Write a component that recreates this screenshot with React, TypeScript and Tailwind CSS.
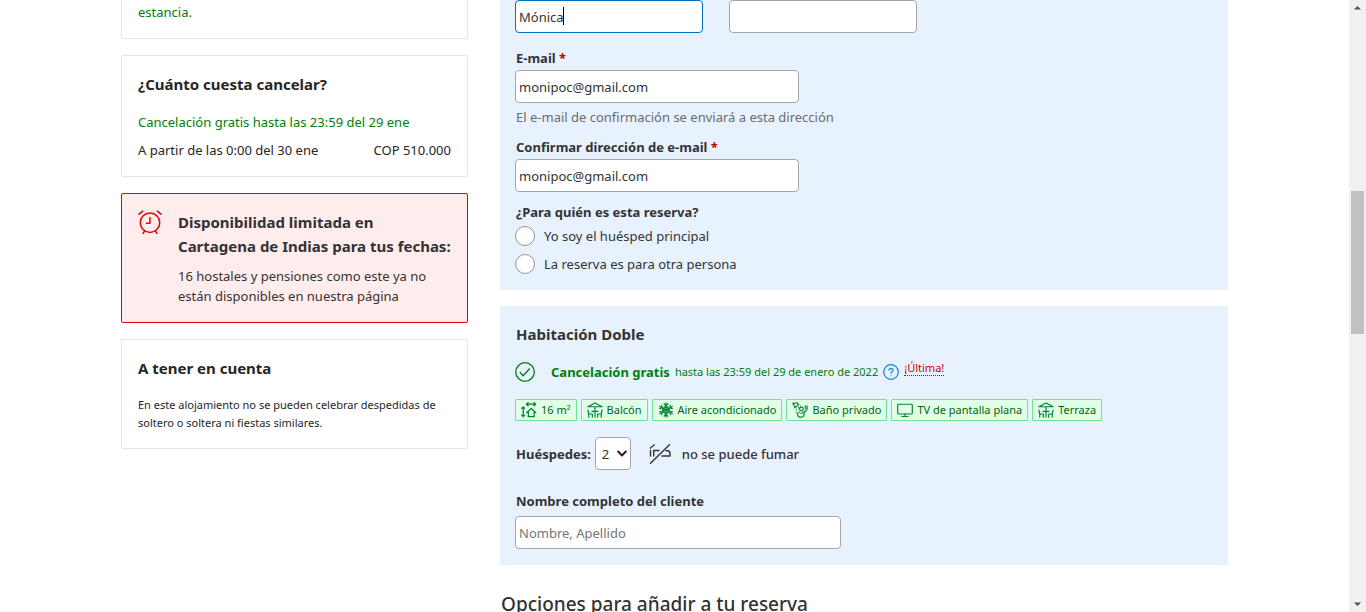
import type { ReactNode } from "react";

const card = "rounded-[2px] border border-[#e6e6e6] p-4";
const fieldBase =
  "block h-[33px] max-w-full rounded-[4px] border bg-white px-[3px] text-[13px] leading-5 text-[#333] placeholder:text-[#757575] outline-none";
const field = `${fieldBase} border-[#a6a6a6]`;
const label = "block pl-px text-[13px] leading-5 font-bold";

function Svg({ children, className, box = "0 0 24 24", sw = 1.5 }: { children: ReactNode; className: string; box?: string; sw?: number }) {
  return (
    <svg viewBox={box} className={className} fill="none" stroke="currentColor" strokeWidth={sw} strokeLinecap="round" strokeLinejoin="round" aria-hidden="true">
      {children}
    </svg>
  );
}

const badgeIcon = "size-4 shrink-0";

function SizeIcon() {
  return (
    <Svg className={badgeIcon} box="0 0 18 18" sw={1.4}>
      <path d="M6 2.500h10.500M8 .8 6 2.500l2 1.700M14.700.8l1.800 1.700-1.800 1.700M2.500 5.500v11M.8 7.200l1.700-1.700 1.700 1.700M.8 14.800l1.700 1.700 1.700-1.700" />
      <path d="M6.300 12 11.500 7.300l5.200 4.700M8.200 11v5.500h6.600V11" />
    </Svg>
  );
}

function PatioIcon() {
  return (
    <Svg className={badgeIcon} box="0 0 18 18" sw={1.3}>
      <path d="M1 5.300 9 1l8 4.300zM9 5.300V17.200M5.500 10.500h7M1 9l1 4.500h4v3.700M2 13.500v3.700M17 9l-1 4.500h-4v3.700M16 13.500v3.700" />
    </Svg>
  );
}

function SnowIcon() {
  const arms = [0, 60, 120, 180, 240, 300];
  return (
    <Svg className={badgeIcon} box="0 0 18 18" sw={1.3}>
      {arms.map((a) => (
        <path key={a} transform={`rotate(${a} 9 9)`} d="M9 9V.9M6.800 2 9 4.200 11.200 2M7.400 5.400 9 6.800l1.600-1.400" />
      ))}
    </Svg>
  );
}

function BathIcon() {
  return (
    <Svg className={badgeIcon} box="0 0 18 18" sw={1.3}>
      <path d="M.8 2 6 .9M1.300 1l1.900 5.500M3.200 6.500l4.300-3.700M6 .9l1.500 1.900M5 8.500v.3M7.200 6.300v.3M9.300 4.300v.3M4.500 11.500v.3" />
      <circle cx="10.600" cy="7.800" r="2.100" />
      <path d="M17 4.200v3.300c0 1.700-1.300 2.700-3.300 3.500v2.200c0 2.300-1.500 3.900-3.700 3.900s-3.700-1.400-3.700-3.700c0-1.400.8-2.200 2.200-2.200M15 4.200v3.300M9.800 12.700c1.200 0 2.800-.5 3.900-1.700" />
    </Svg>
  );
}

function TvIcon() {
  return (
    <Svg className={badgeIcon} box="0 0 18 18" sw={1.3}>
      <rect x=".8" y="2.500" width="16.400" height="11" rx="1" />
      <path d="M9 13.500v2.700M5.500 16.300h7" />
    </Svg>
  );
}

const amenities = [
  { icon: <SizeIcon />, text: "16 m²" },
  { icon: <PatioIcon />, text: "Balcón" },
  { icon: <SnowIcon />, text: "Aire acondicionado" },
  { icon: <BathIcon />, text: "Baño privado" },
  { icon: <TvIcon />, text: "TV de pantalla plana" },
  { icon: <PatioIcon />, text: "Terraza" },
];

function Sidebar() {
  return (
    <aside className="flex w-[347px] shrink-0 flex-col gap-4 text-[13px] leading-5 text-[#262626]">
      <section className="rounded-b-[2px] border border-t-0 border-[#e6e6e6] px-4 pt-[2px] pb-4 text-[#008009]">
        <p>estancia.</p>
      </section>

      <section className={card}>
        <h2 className="mb-4 text-[15px] leading-6 font-bold">¿Cuánto cuesta cancelar?</h2>
        <p className="mb-2 text-[#008009]">Cancelación gratis hasta las 23:59 del 29 ene</p>
        <p className="flex justify-between">
          <span>A partir de las 0:00 del 30 ene</span>
          <span>COP 510.000</span>
        </p>
      </section>

      <section className="flex gap-4 rounded-[2px] border border-[#e20000] bg-[#ffeded] p-4 text-[#333]">
        <Svg className="size-6 shrink-0 text-[#e60000]">
          <circle cx="12" cy="12.700" r="9.700" />
          <path d="M12 7.500v5.700H8.500M1 4.200l3.700-3M23 4.200l-3.700-3M6.500 21 5 23.800M17.500 21l1.500 2.800" />
        </Svg>
        <div className="min-w-0">
          <h2 className="mb-2 text-[15px] leading-6 font-bold">
            Disponibilidad limitada en
            <br />
            Cartagena de Indias para tus fechas:
          </h2>
          <p>
            16 hostales y pensiones como este ya no
            <br />
            están disponibles en nuestra página
          </p>
        </div>
      </section>

      <section className={card}>
        <h2 className="mb-4 text-[15px] leading-6 font-bold">A tener en cuenta</h2>
        <p className="text-[11px] leading-[18px]">
          En este alojamiento no se pueden celebrar despedidas de
          <br />
          soltero o soltera ni fiestas similares.
        </p>
      </section>
    </aside>
  );
}

function GuestForm() {
  return (
    <section className="bg-[#e8f2ff] px-[15px] pb-4">
      <div className="mb-[15px] flex gap-[26px]">
        <div className="relative">
          <input aria-label="Nombre" defaultValue="Mónica" className={`${fieldBase} w-[188px] border-[#0071c2]`} />
          <span className="absolute top-[7px] left-12 h-[18px] w-px bg-black" />
        </div>
        <input aria-label="Apellido" className={`${field} w-[188px]`} />
      </div>

      <label htmlFor="email" className={`${label} mb-[2px]`}>
        E-mail <span className="text-[#c00]">*</span>
      </label>
      <input id="email" type="email" defaultValue="monipoc@gmail.com" className={`${field} w-[284px]`} />
      <p className="mt-1 mb-[10px] pl-px text-[13px] leading-5 text-[#6b6b6b]">El e-mail de confirmación se enviará a esta dirección</p>

      <label htmlFor="email2" className={`${label} mb-[2px]`}>
        Confirmar dirección de e-mail <span className="text-[#c00]">*</span>
      </label>
      <input id="email2" type="email" defaultValue="monipoc@gmail.com" className={`${field} mb-[10px] w-[284px]`} />

      <fieldset className="text-[13px] leading-5">
        <legend className={`${label} mb-1`}>¿Para quién es esta reserva?</legend>
        <div className="flex flex-col gap-2">
          {["Yo soy el huésped principal", "La reserva es para otra persona"].map((t) => (
            <label key={t} className="flex items-center gap-[9px]">
              <input type="radio" name="who" className="size-5 appearance-none rounded-full border border-[#949494] bg-white checked:border-[6px] checked:border-[#0071c2]" />
              {t}
            </label>
          ))}
        </div>
      </fieldset>
    </section>
  );
}

function Room() {
  return (
    <section className="bg-[#e8f2ff] px-[15px] py-4">
      <h2 className="mb-4 pl-px text-[15px] leading-6 font-bold">Habitación Doble</h2>

      <div className="mb-[17px] flex h-5 items-center text-[#008009]">
        <Svg className="mr-4 size-5 shrink-0" box="0 0 20 20" sw={1.3}>
          <circle cx="10" cy="10" r="9.300" />
          <path d="m5.200 10.500 3 3.200 6.300-7" />
        </Svg>
        <strong className="mr-[5px] text-[13px] leading-5">Cancelación gratis</strong>
        <span className="text-[11px] leading-5">hasta las 23:59 del 29 de enero de 2022</span>
        <Svg className="mx-[5px] size-4 shrink-0 text-[#0a84d0]" box="0 0 16 16" sw={1.2}>
          <circle cx="8" cy="8" r="7.300" />
          <path d="M6 6.300c0-1.200.9-2 2-2s2 .8 2 1.900c0 1.500-2 1.500-2 3M8 11.500v.2" />
        </Svg>
        <a href="#ultima" className="mb-2 border-b border-dotted border-[#c00] text-[11px] leading-[14px] text-[#c00]">
          ¡Última!
        </a>
      </div>

      <ul className="mb-4 flex flex-wrap gap-1">
        {amenities.map((a) => (
          <li key={a.text} className="flex h-[22px] items-center gap-1 rounded-[1px] border border-[#6be695] bg-[#e1ffe8] px-[5px] text-[11px] leading-5 text-[#006607]">
            <span className="text-[#008234]">{a.icon}</span>
            {a.text}
          </li>
        ))}
      </ul>

      <div className="mb-[21px] flex items-center text-[13px] leading-5">
        <label htmlFor="guests" className={`${label} mr-1`}>
          Huéspedes:
        </label>
        <div className="relative">
          <select id="guests" className={`${field} w-9 appearance-none pl-[6px]`}>
            <option>2</option>
            <option>1</option>
          </select>
          <Svg className="pointer-events-none absolute top-3 right-1 size-[10px] text-[#222]" box="0 0 10 10" sw={2}>
            <path d="m1.200 2.500 3.800 4 3.800-4" />
          </Svg>
        </div>
        <Svg className="mr-[11px] ml-[18px] h-5 w-[22px] shrink-0" box="0 0 22 20" sw={1.4}>
          <path d="M1.500 19.300 20.500.8M1.500 6.500v5.500M4.700 12V6.500H10M13 12H21V9.500c0-1.800-1-2.700-2.500-2.700H17M1.500 4.200C1.700 2.200 4.800 3.200 5 .8" />
        </Svg>
        <span className="font-medium">no se puede fumar</span>
      </div>

      <label htmlFor="client" className={`${label} mb-[5px]`}>
        Nombre completo del cliente
      </label>
      <input id="client" placeholder="Nombre, Apellido" className={`${field} w-[326px]`} />
    </section>
  );
}

function Scrollbar() {
  return (
    <div aria-hidden="true" className="flex w-[17px] shrink-0 flex-col bg-[#f1f1f1] text-[#505050]">
      <svg viewBox="0 0 17 17" className="size-[17px] shrink-0" fill="currentColor">
        <path d="M5 9.500h7L8.500 6z" />
      </svg>
      <div className="grow-[174]" />
      <div className="mx-[2px] grow-[143] bg-[#c1c1c1]" />
      <div className="grow-[261]" />
      <svg viewBox="0 0 17 17" className="size-[17px] shrink-0" fill="currentColor">
        <path d="M5 7.500h7L8.500 11z" />
      </svg>
    </div>
  );
}

export default function App() {
  return (
    <div className="flex h-screen overflow-hidden bg-white font-['Noto_Sans','Open_Sans',sans-serif] text-[#333]">
      <div className="min-w-0 grow overflow-hidden">
        <div className="mx-auto flex max-w-[1107px] items-start gap-8">
          <Sidebar />
          <main className="flex min-w-0 grow flex-col gap-4">
            <GuestForm />
            <Room />
            <h2 className="mt-[9px] pl-px text-[19px] leading-7 font-medium">Opciones para añadir a tu reserva</h2>
          </main>
        </div>
      </div>
      <Scrollbar />
    </div>
  );
}
